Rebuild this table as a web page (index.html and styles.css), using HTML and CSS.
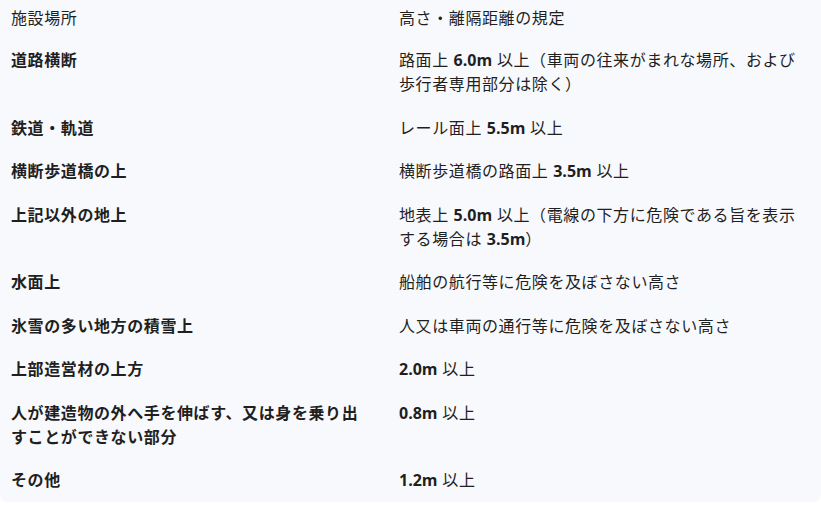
FILE: index.html
```html
<!DOCTYPE html>
<html lang="ja">
<head>
<meta charset="utf-8">
<link rel="stylesheet" href="styles.css">
</head>
<body>
<div class="panel">
  <table class="rules">
    <colgroup><col class="col-place"><col class="col-rule"></colgroup>
    <thead>
      <tr><th>施設場所</th><th>高さ・離隔距離の規定</th></tr>
    </thead>
    <tbody>
      <tr><td class="place">道路横断</td><td>路面上 <b>6.0m</b> 以上（車両の往来がまれな場所、および歩行者専用部分は除く）</td></tr>
      <tr><td class="place">鉄道・軌道</td><td>レール面上 <b>5.5m</b> 以上</td></tr>
      <tr><td class="place">横断歩道橋の上</td><td>横断歩道橋の路面上 <b>3.5m</b> 以上</td></tr>
      <tr><td class="place">上記以外の地上</td><td>地表上 <b>5.0m</b> 以上（電線の下方に危険である旨を表示する場合は <b>3.5m</b>）</td></tr>
      <tr><td class="place">水面上</td><td>船舶の航行等に危険を及ぼさない高さ</td></tr>
      <tr><td class="place">氷雪の多い地方の積雪上</td><td>人又は車両の通行等に危険を及ぼさない高さ</td></tr>
      <tr><td class="place">上部造営材の上方</td><td><b>2.0m</b> 以上</td></tr>
      <tr><td class="place">人が建造物の外へ手を伸ばす、又は身を乗り出すことができない部分</td><td><b>0.8m</b> 以上</td></tr>
      <tr><td class="place">その他</td><td><b>1.2m</b> 以上</td></tr>
    </tbody>
  </table>
</div>
</body>
</html>
```

FILE: styles.css
```css
html, body {
  margin: 0;
  padding: 0;
  background: #ffffff;
}
body {
  font-family: "Open Sans", "Noto Sans CJK JP", sans-serif;
  color: #1f1f1f;
  font-size: 16px;
  line-height: 24px;
  letter-spacing: 0.6px;
}
.panel {
  background: #f8f9fc;
  border-radius: 0 0 8px 8px;
  width: 821px;
}
.rules {
  width: 100%;
  border-collapse: collapse;
  table-layout: fixed;
}
.col-place { width: 388px; }
.rules th {
  font-weight: 400;
  text-align: left;
  vertical-align: top;
  padding: 6px 11px 8px 11px;
  line-height: 24px;
}
.rules td {
  vertical-align: top;
  padding: 10px 11px 9.5px 11px;
  line-height: 24px;
}
.rules td.place {
  font-weight: 700;
  padding-right: 18px;
}
.rules b {
  font-weight: 700;
  line-height: 1;
  letter-spacing: 0;
}
```
